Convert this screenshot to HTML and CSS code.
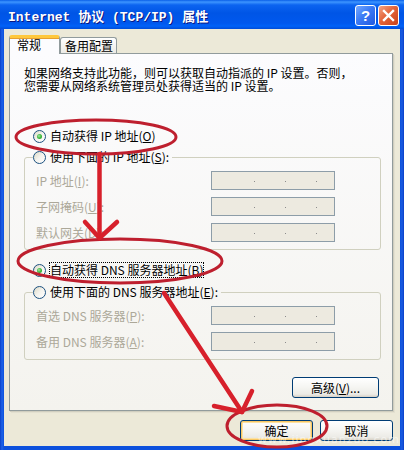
FILE: index.html
```html
<!DOCTYPE html>
<html lang="zh-CN">
<head>
<meta charset="utf-8">
<title>Internet 协议 (TCP/IP) 属性</title>
<link rel="stylesheet" href="styles.css">
</head>
<body>
<div class="window">
  <div class="titlebar">
    <span class="title">Internet 协议 (TCP/IP) 属性</span>
    <div class="tbtns">
      <span class="tbtn help">?</span>
      <span class="tbtn close"><svg width="19" height="19" viewBox="0 0 19 19"><path d="M5 5 L14 14 M14 5 L5 14" stroke="#fff" stroke-width="2.4" stroke-linecap="square"/></svg></span>
    </div>
  </div>
  <div class="client">
    <div class="tabs">
      <div class="tab active">常规</div>
      <div class="tab">备用配置</div>
    </div>
    <div class="panel">
      <p class="intro"><span class="line">如果网络支持此功能，则可以获取自动指派的 IP 设置。否则，</span><span class="line">您需要从网络系统管理员处获得适当的 IP 设置。</span></p>
      <div class="radio-row first"><span class="radio checked"></span><span class="lbl">自动获得 IP 地址(<u>O</u>)</span></div>
      <fieldset class="group g1">
        <legend><span class="radio"></span><span class="lbl">使用下面的 IP 地址(<u>S</u>):</span></legend>
        <div class="frow"><span class="flabel">IP 地址(<u>I</u>):</span><span class="ip"><i></i><i></i><i></i></span></div>
        <div class="frow"><span class="flabel">子网掩码(<u>U</u>):</span><span class="ip"><i></i><i></i><i></i></span></div>
        <div class="frow"><span class="flabel">默认网关(<u>D</u>):</span><span class="ip"><i></i><i></i><i></i></span></div>
      </fieldset>
      <div class="radio-row third"><span class="radio checked"></span><span class="lbl focus">自动获得 DNS 服务器地址(<u>B</u>)</span></div>
      <fieldset class="group g2">
        <legend><span class="radio"></span><span class="lbl">使用下面的 DNS 服务器地址(<u>E</u>):</span></legend>
        <div class="frow"><span class="flabel">首选 DNS 服务器(<u>P</u>):</span><span class="ip"><i></i><i></i><i></i></span></div>
        <div class="frow"><span class="flabel">备用 DNS 服务器(<u>A</u>):</span><span class="ip"><i></i><i></i><i></i></span></div>
      </fieldset>
      <div class="adv-row"><button class="btn adv">高级(<u>V</u>)...</button></div>
    </div>
    <div class="actions">
      <button class="btn hover">确定</button>
      <button class="btn">取消</button>
    </div>
  </div>
  <div class="watermark">www.jingxuanzuo.com</div>
  <svg class="annot" width="404" height="450" viewBox="0 0 404 450">
    <g fill="none" stroke="#BE1F2E" stroke-width="3">
      <ellipse cx="96" cy="137" rx="80" ry="17"/>
      <ellipse cx="120" cy="261" rx="102" ry="22"/>
      <ellipse cx="277" cy="426" rx="50" ry="21"/>
    </g>
    <g fill="none" stroke="#D7202B" stroke-width="4.5" stroke-linecap="round" stroke-linejoin="round">
      <path d="M99.5 154 L99.5 238"/>
      <path d="M85 222 L99.5 238 L117 222"/>
      <path d="M164 293 L242 412"/>
      <path d="M214 406 L242 412 L252 391"/>
    </g>
  </svg>
</div>
</body>
</html>
```
FILE: styles.css
```css
* { box-sizing: border-box; }
html, body { margin: 0; padding: 0; }
body {
  width: 404px;
  height: 450px;
  overflow: hidden;
  font-family: "Noto Sans CJK SC", "Liberation Sans", sans-serif;
  font-size: 12px;
  color: #000;
}
.window {
  position: relative;
  width: 404px;
  height: 450px;
  overflow: hidden;
  display: flex;
  flex-direction: column;
  background: linear-gradient(to right, #0A3FC8 0, #1D62E8 2px, #0B50DD 4px, #0B50DD 400px, #1A5BE0 402px, #0A3FC8 404px);
}
.titlebar {
  height: 29px;
  flex: none;
  display: flex;
  align-items: center;
  justify-content: space-between;
  padding: 1px 5px 0 8px;
  background: linear-gradient(#0A5FE8 0%, #3D95FF 7%, #0C64F0 17%, #0055E6 45%, #0058EE 80%, #0062F8 90%, #004CD8 100%);
}
.title {
  color: #fff;
  font-family: "Liberation Mono", "Noto Sans CJK SC", monospace;
  font-weight: bold;
  font-size: 13px;
  text-shadow: 1px 1px 0 #0A1883;
}
.tbtns { display: flex; gap: 2px; }
.tbtn {
  width: 21px;
  height: 21px;
  border: 1px solid #fff;
  border-radius: 3px;
  display: flex;
  align-items: center;
  justify-content: center;
  color: #fff;
  font-family: "Liberation Sans", sans-serif;
  font-weight: bold;
  font-size: 15px;
}
.help { background: linear-gradient(135deg, #75A8FF 0%, #3C7BF5 45%, #2058E0 100%); }
.close { background: linear-gradient(135deg, #F5A485 0%, #E3643A 45%, #C9421A 100%); }
.client {
  flex: 1;
  margin: 0 4px 4px;
  background: #ECE9D8;
  padding: 6px 0 0 5px;
  display: flex;
  flex-direction: column;
}
.tabs {
  display: flex;
  align-items: flex-end;
  height: 19px;
  margin-bottom: -1px;
  position: relative;
  z-index: 1;
}
.tab {
  height: 16px;
  margin-bottom: 1px;
  padding: 0 3px 0 4px;
  border: 1px solid #919B9C;
  border-bottom: 0;
  border-radius: 3px 3px 0 0;
  background: linear-gradient(#FFFFFF, #ECEBE6);
  line-height: 15px;
  white-space: nowrap;
}
.tab.active {
  width: 51px;
  height: 19px;
  margin-bottom: 0;
  padding: 0 0 0 7px;
  border-top: 3px solid #FFC83C;
  background: #FCFCFE;
  line-height: 13px;
  box-shadow: inset 0 1px 0 #E6A030;
}
.panel {
  width: 384px;
  height: 358px;
  border: 1px solid #919B9C;
  background: linear-gradient(#FCFCFE, #F4F3EE);
  box-shadow: 1px 1px 0 #D0CEBF, 2px 2px 0 #E3E0D0;
  padding: 12px 11px 0 14px;
  display: flex;
  flex-direction: column;
}
.intro {
  margin: 0;
  display: flex;
  flex-direction: column;
  white-space: nowrap;
}
.intro .line { display: block; height: 13px; line-height: 13px; }
.radio-row {
  display: flex;
  align-items: center;
  height: 16px;
  padding-left: 9px;
}
.radio-row.first { margin-top: 36px; }
.radio-row.third { margin-top: 12px; }
.radio {
  width: 13px;
  height: 13px;
  flex: none;
  border-radius: 50%;
  border: 1px solid #1C5180;
  background: linear-gradient(135deg, #DCD9C5 0%, #F4F3EE 50%, #FFFFFF 100%);
  display: flex;
  align-items: center;
  justify-content: center;
}
.radio.checked::after {
  content: "";
  width: 5px;
  height: 5px;
  border-radius: 50%;
  background: radial-gradient(circle at 40% 40%, #A6E8A6 0%, #3DB83D 50%, #21A121 100%);
}
.lbl { margin-left: 4px; white-space: nowrap; line-height: 14px; }
.lbl.focus { outline: 1px dotted #000; outline-offset: 0; }
.group {
  margin: 0;
  border: 1px solid #D0D0BF;
  border-radius: 3px;
  padding: 6px 0 7px 0;
  min-width: 0;
}
.g1 { margin-top: 5px; }
.g2 { margin-top: 6px; padding-bottom: 8px; }
.group legend {
  display: flex;
  align-items: center;
  height: 16px;
  margin-left: 8px;
  padding: 0 3px 0 0;
}
.frow {
  display: flex;
  align-items: center;
  height: 19px;
  padding-left: 11px;
}
.frow + .frow { margin-top: 7px; }
.flabel {
  width: 175px;
  color: #ACA899;
  white-space: nowrap;
}
.ip {
  width: 124px;
  height: 19px;
  border: 1px solid #8D9DA8;
  background: #EDEAE0;
  display: flex;
  align-items: center;
  padding: 1px 0 0 42px;
  gap: 30px;
}
.ip i {
  width: 1px;
  height: 1px;
  background: #8C8C8C;
}
.adv-row {
  display: flex;
  justify-content: flex-end;
  margin-top: 17px;
  padding-right: 2px;
}
.btn {
  height: 21px;
  border: 1px solid #003C74;
  border-radius: 3px;
  background: linear-gradient(#FFFFFF 0%, #F6F6F3 45%, #ECEBE6 85%, #D6D0C5 100%);
  font-family: "Noto Sans CJK SC", "Liberation Sans", sans-serif;
  font-size: 12px;
  color: #000;
  padding: 0;
  width: 73px;
  line-height: 17px;
}
.btn.adv { width: 87px; }
.btn.hover { box-shadow: inset 0 0 0 1px #F8C763, inset 0 0 0 2px #FCE2A4; }
.actions {
  display: flex;
  justify-content: flex-end;
  gap: 7px;
  margin-top: 9px;
  padding-right: 7px;
}
.annot {
  position: absolute;
  left: 0;
  top: 0;
  pointer-events: none;
}
.watermark {
  position: absolute;
  left: 258px;
  top: 434px;
  color: rgba(255, 255, 255, 0.55);
  font-family: "DejaVu Sans", sans-serif;
  font-size: 11px;
  line-height: 12px;
  letter-spacing: 1px;
  white-space: nowrap;
  pointer-events: none;
}
```
